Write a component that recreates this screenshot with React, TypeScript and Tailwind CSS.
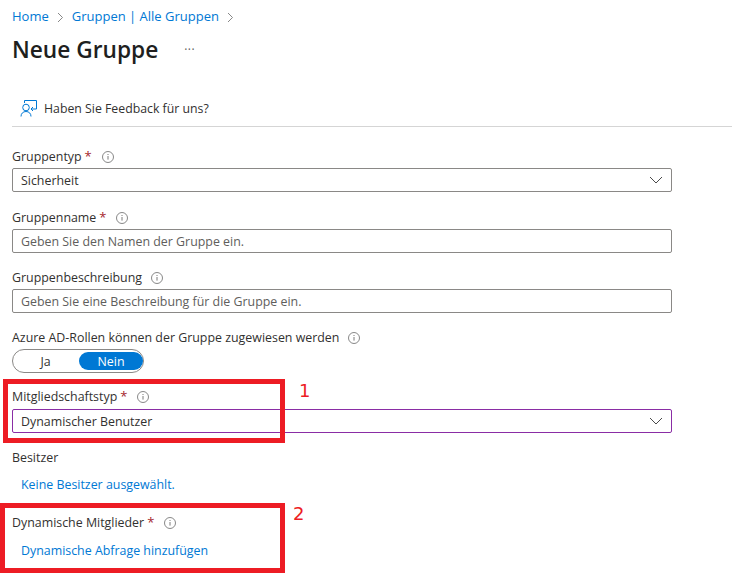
import React from "react";

const font = "font-['Open_Sans','Noto_Sans',sans-serif]";

function Info() {
  return (
    <svg width="12" height="12" viewBox="0 0 12 12" fill="none" className="ml-[9px] shrink-0">
      <circle cx="6" cy="6" r="5.5" stroke="#7a7a7a" strokeWidth="0.9" />
      <path d="M6 5v3.6" stroke="#7a7a7a" strokeWidth="1" />
      <path d="M6 3v1" stroke="#7a7a7a" strokeWidth="1" />
    </svg>
  );
}

function Label({ text, req, className = "" }: { text: string; req?: boolean; className?: string }) {
  return (
    <div className={`flex h-[18px] items-center text-[12.4px] text-[#323130] ${className}`}>
      <span>{text}</span>
      {req && <span className="ml-[3px] mr-[1px] text-[13px] text-[#a4262c]">*</span>}
      <Info />
    </div>
  );
}

function Chevron() {
  return (
    <svg width="14" height="8" viewBox="0 0 14 8" fill="none" className="shrink-0">
      <path d="M1 1l6 6 6-6" stroke="#4a4a4a" strokeWidth="1" />
    </svg>
  );
}

function Select({ value, purple }: { value: string; purple?: boolean }) {
  return (
    <div
      className={`flex h-[24px] w-[660px] items-center justify-between rounded-[2px] border pl-[8px] pr-[8px] text-[12.4px] text-[#323130] ${
        purple ? "border-[#8a2da5]" : "border-[#8a8886]"
      }`}
    >
      <span className="pt-[2px]">{value}</span>
      <Chevron />
    </div>
  );
}

function TextInput({ placeholder }: { placeholder: string }) {
  return (
    <div className="flex h-[24px] w-[660px] items-center rounded-[2px] border border-[#8a8886] pl-[8px] pt-[2px] text-[12.4px] text-[#605e5c]">
      {placeholder}
    </div>
  );
}

function Link({ children, className = "" }: { children: React.ReactNode; className?: string }) {
  return <div className={`pl-[9px] text-[12.4px] text-[#0078d4] ${className}`}>{children}</div>;
}

function Crumb() {
  return (
    <svg width="7" height="11" viewBox="0 0 7 11" fill="none" className="shrink-0">
      <path d="M1 1l4.5 4.5L1 10" stroke="#7a7a7a" strokeWidth="0.9" />
    </svg>
  );
}

export default function App() {
  return (
    <div className={`relative h-[580px] w-[732px] overflow-hidden bg-white pl-[12px] ${font}`}>
      <div className="mt-[8px] flex h-[18px] items-center text-[13px] text-[#0078d4]">
        <span>Home</span>
        <span className="mx-[8px] flex"><Crumb /></span>
        <span>Gruppen | Alle Gruppen</span>
        <span className="ml-[8px] flex"><Crumb /></span>
      </div>

      <div className="mt-[9px] flex h-[30px] items-center">
        <h1 className="text-[22.7px] font-semibold text-[#201f1e]">Neue Gruppe</h1>
        <span className="ml-[26px] text-[12px] leading-none tracking-[0.5px] text-[#605e5c]">···</span>
      </div>

      <div className="mt-[28px] flex h-[34px] items-center border-b border-[#d5d5d5] pl-[8px] text-[12.3px] text-[#323130]">
        <svg width="17" height="17" viewBox="0 0 17 17" fill="none" className="-mt-[3px] mr-[7px]">
          <path d="M4.5 3V.5h12V9H11" stroke="#0078d4" strokeWidth="1" />
          <path d="M13 7l-2 2 2 2" stroke="#0078d4" strokeWidth="1" />
          <circle cx="6" cy="7.5" r="3.3" stroke="#0078d4" strokeWidth="1" />
          <path d="M1 16.5c0-3 2-5 5-5s5 2 5 5" stroke="#0078d4" strokeWidth="1" />
        </svg>
        <span>Haben Sie Feedback für uns?</span>
      </div>

      <Label text="Gruppentyp" req className="mt-[21px]" />
      <div className="mt-[2px]"><Select value="Sicherheit" /></div>

      <Label text="Gruppenname" req className="mt-[17px]" />
      <div className="mt-[2px]"><TextInput placeholder="Geben Sie den Namen der Gruppe ein." /></div>

      <Label text="Gruppenbeschreibung" className="mt-[16px]" />
      <div className="mt-[2px]"><TextInput placeholder="Geben Sie eine Beschreibung für die Gruppe ein." /></div>

      <Label text="Azure AD-Rollen können der Gruppe zugewiesen werden" className="mt-[16px]" />
      <div className="mt-[2px] flex h-[24px] w-[132px] items-center rounded-full border border-[#8a8886] pl-[1px] text-[12.4px]">
        <span className="flex-1 pr-[2px] pt-[2px] text-center text-[#323130]">Ja</span>
        <span className="flex h-[18px] w-[64px] items-center justify-center rounded-full bg-[#0078d4] pt-[2px] text-white">Nein</span>
      </div>

      <Label text="Mitgliedschaftstyp" req className="mt-[15px]" />
      <div className="mt-[3px]"><Select value="Dynamischer Benutzer" purple /></div>

      <div className="mt-[16px] flex h-[18px] items-center text-[12.4px] text-[#323130]">Besitzer</div>
      <Link className="mt-[9px] h-[18px] leading-[18px]">Keine Besitzer ausgewählt.</Link>

      <Label text="Dynamische Mitglieder" req className="mt-[20px]" />
      <Link className="mt-[10px] h-[18px] leading-[18px]">Dynamische Abfrage hinzufügen</Link>

      <div className="absolute left-[3px] top-[379px] h-[64px] w-[282px] border-[5px] border-[#ed1c24]" />
      <div className="absolute left-0 top-[503px] h-[70px] w-[285px] border-[5px] border-[#ed1c24]" />
      <div className="absolute left-[299px] top-[380px] font-['DejaVu_Sans',sans-serif] text-[18px] leading-[22px] text-[#ed1c24]">1</div>
      <div className="absolute left-[293px] top-[503px] font-['DejaVu_Sans',sans-serif] text-[18px] leading-[22px] text-[#ed1c24]">2</div>
    </div>
  );
}
